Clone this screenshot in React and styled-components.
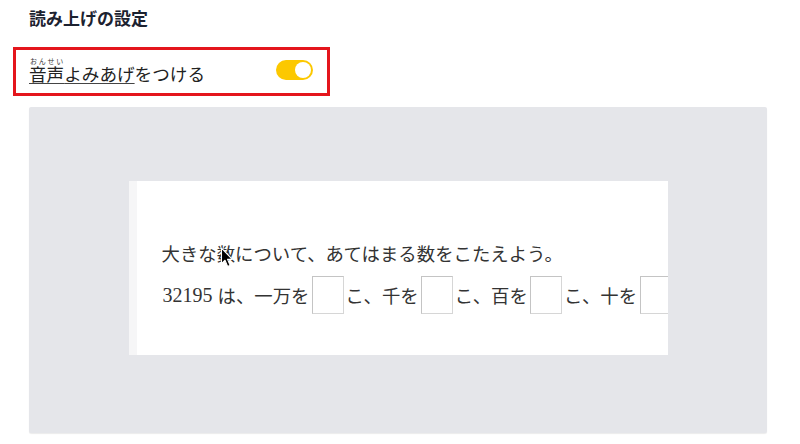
import React, { useState } from "react";
import styled, { createGlobalStyle } from "styled-components";

const GlobalStyle = createGlobalStyle`
  html, body {
    margin: 0;
    padding: 0;
    background: #ffffff;
  }
  body {
    font-family: "Noto Sans CJK JP", "Noto Sans", sans-serif;
    color: #222;
  }
`;

const Page = styled.div`
  width: 800px;
  height: 444px;
  box-sizing: border-box;
  padding: 6px 33px 0 29px;
  overflow: hidden;
`;

const Heading = styled.h2`
  margin: 0;
  font-size: 17px;
  line-height: 24px;
  font-weight: 700;
  color: #1c2230;
`;

const SettingRow = styled.div`
  margin: 17px 0 0 -16px;
  width: 317px;
  height: 49px;
  box-sizing: border-box;
  border: 3px solid #e4161d;
  padding: 0 14px 0 13px;
  display: flex;
  align-items: center;
  justify-content: space-between;
`;

const Label = styled.span`
  font-size: 17.6px;
  line-height: 26px;
  color: #222;
  margin-top: 1px;

  ruby {
    ruby-position: over;
  }
  rt {
    font-size: 7px;
    line-height: 8px;
    color: #333;
  }
`;

const Underlined = styled.span`
  text-decoration: underline;
  text-decoration-color: #444;
  text-underline-offset: 2px;
  text-decoration-thickness: 1px;
`;

const Toggle = styled.button`
  width: 37px;
  height: 20px;
  border: none;
  padding: 0;
  border-radius: 10px;
  background: ${(p) => (p.$on ? "#fcc800" : "#c8c8cc")};
  position: relative;
  cursor: pointer;
  margin-top: -4px;

  &::after {
    content: "";
    position: absolute;
    top: 2px;
    left: ${(p) => (p.$on ? "19px" : "2px")};
    width: 16px;
    height: 16px;
    border-radius: 50%;
    background: #ffffff;
  }
`;

const Preview = styled.div`
  margin-top: 11px;
  width: 738px;
  height: 326px;
  background: #e5e6ea;
  border-radius: 2px;
  box-shadow: 0 1px 1px rgba(0, 0, 0, 0.08);
  display: flex;
  align-items: center;
  justify-content: center;
  padding-bottom: 4px;
  box-sizing: border-box;
`;

const Card = styled.div`
  position: relative;
  width: 539px;
  height: 174px;
  box-sizing: border-box;
  background: #ffffff;
  border-left: 8px solid #f6f6f7;
  overflow: hidden;
  padding: 59px 0 0 25px;
  font-family: "Liberation Serif", "Noto Sans CJK JP", serif;
  font-size: 18.4px;
  color: #333;
`;

const Question = styled.div`
  line-height: 26px;
  white-space: nowrap;
  font-family: "Noto Sans CJK JP", sans-serif;
`;

const AnswerLine = styled.div`
  margin-top: 10px;
  display: flex;
  align-items: center;
  white-space: nowrap;
  line-height: 26px;
`;

const Num = styled.span`
  font-family: "Liberation Serif", serif;
  font-size: 20px;
  margin: 0 5px 0 1px;
`;

const Jp = styled.span`
  font-family: "Noto Sans CJK JP", sans-serif;
  flex-shrink: 0;
`;

const Blank = styled.span`
  flex-shrink: 0;
  width: 32px;
  height: 38px;
  box-sizing: border-box;
  margin: 0 1.5px 0 2.5px;
  border: 1px solid #d6d6d6;
  border-top-color: #c4c4c4;
  border-left-color: #c4c4c4;
  background: #fff;
`;

const Cursor = styled.svg`
  position: absolute;
  left: 83px;
  top: 66px;
  width: 14px;
  height: 21px;
  pointer-events: none;
`;

export default function App() {
  const [on, setOn] = useState(true);
  const parts = ["こ、千を", "こ、百を", "こ、十を"];

  return (
    <>
      <GlobalStyle />
      <Page>
        <Heading>読み上げの設定</Heading>
        <SettingRow>
          <Label>
            <Underlined>
              <ruby>
                音声<rt>おんせい</rt>
              </ruby>
              よみあげ
            </Underlined>
            をつける
          </Label>
          <Toggle $on={on} onClick={() => setOn(!on)} aria-label="音声よみあげ" />
        </SettingRow>
        <Preview>
          <Card>
            <Question>大きな数について、あてはまる数をこたえよう。</Question>
            <AnswerLine>
              <Num>32195</Num>
              <Jp>は、一万を</Jp>
              <Blank />
              {parts.map((p) => (
                <React.Fragment key={p}>
                  <Jp>{p}</Jp>
                  <Blank />
                </React.Fragment>
              ))}
            </AnswerLine>
            <Cursor viewBox="0 0 12 19">
              <path
                d="M1 1 L1 15 L4.2 12 L6.6 17.6 L8.8 16.6 L6.5 11.2 L10.8 11.2 Z"
                fill="#000"
                stroke="#fff"
                strokeWidth="1"
                strokeLinejoin="round"
              />
            </Cursor>
          </Card>
        </Preview>
      </Page>
    </>
  );
}
